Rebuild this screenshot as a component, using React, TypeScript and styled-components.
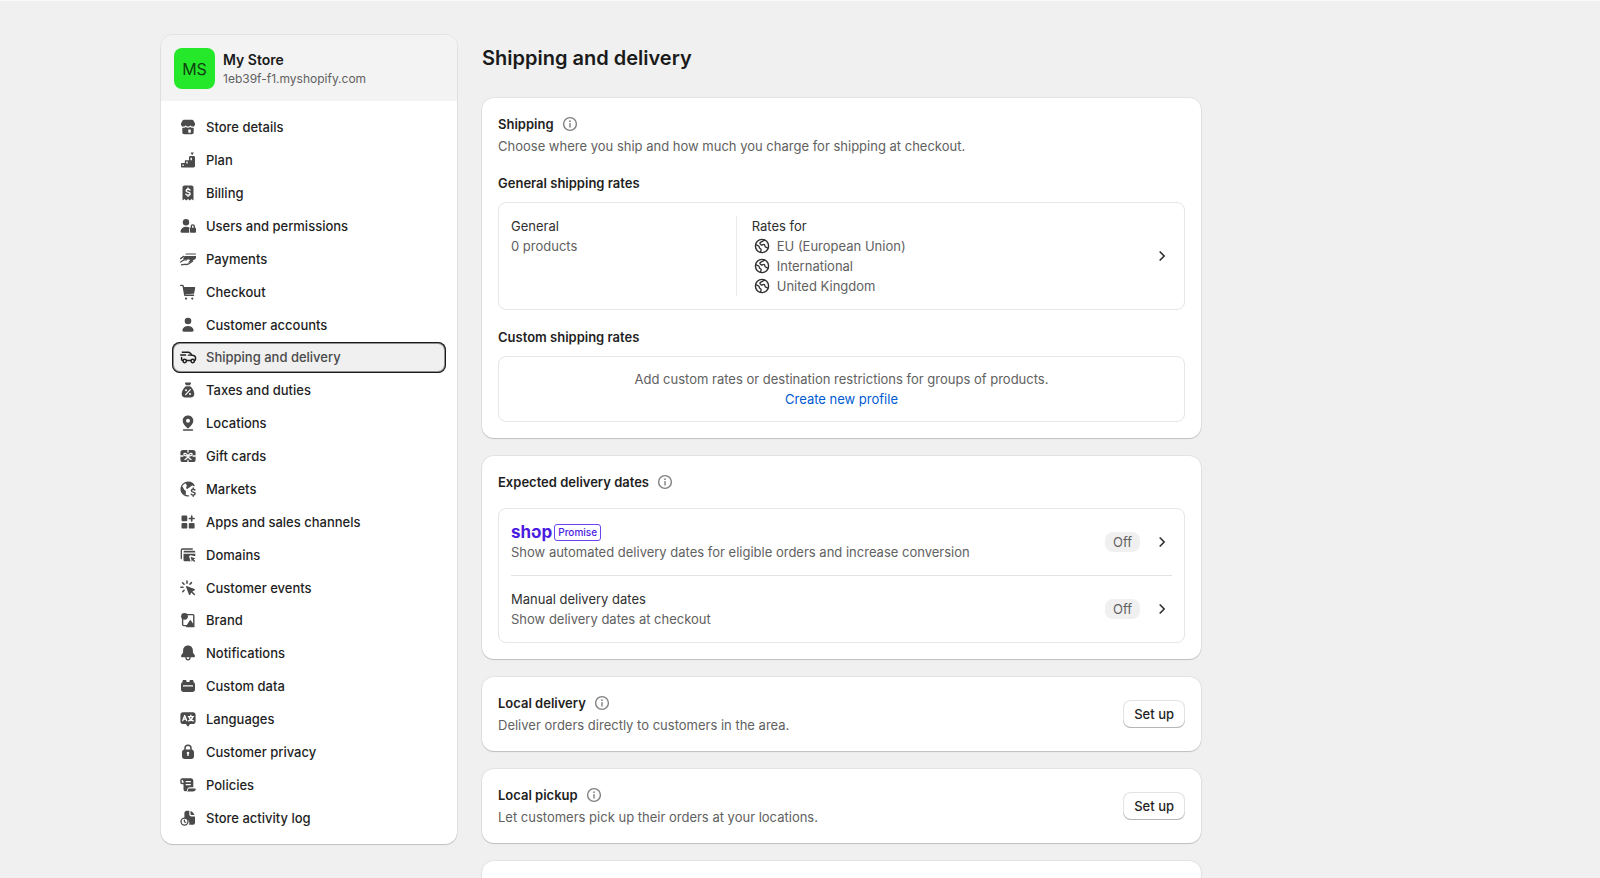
import React from 'react';
import styled, { createGlobalStyle, css } from 'styled-components';

const GlobalStyle = createGlobalStyle`
  *, *::before, *::after { box-sizing: border-box; }
  body {
    margin: 0;
    background: #f0f0f0;
    color: #303030;
    font-family: Inter, "Liberation Sans", sans-serif;
    font-size: 13px;
    line-height: 20px;
  }
  h1, h2, h3, p, ul { margin: 0; padding: 0; }
  ul { list-style: none; }
  button { font: inherit; }
`;

const Page = styled.div`
  display: flex;
  align-items: flex-start;
  gap: 25px;
  min-height: 100vh;
  padding: 34px 16px 0 161px;
  border-top: 1px solid #fafafa;
`;

const surface = css`
  background: #fff;
  border-radius: 12px;
  box-shadow: 0 1px 1px rgba(0, 0, 0, 0.16), 0 0 0 1px rgba(0, 0, 0, 0.05);
`;

const Sidebar = styled.aside`
  ${surface}
  flex: 0 0 296px;
  overflow: hidden;
`;

const StoreHeader = styled.div`
  display: flex;
  align-items: center;
  gap: 8px;
  padding: 13px 13px 12px;
  background: #f3f3f3;
`;

const Avatar = styled.span`
  display: grid;
  place-items: center;
  width: 41px;
  height: 41px;
  border-radius: 8px;
  background: #25e82b;
  color: #10400f;
  font-size: 16px;
`;

const StoreText = styled.div`
  padding-top: 3px;
`;

const StoreName = styled.p`
  color: #1a1a1a;
  font-size: 14px;
  font-weight: 600;
  line-height: 18px;
`;

const Muted = styled.p`
  color: #616161;
`;

const StoreDomain = styled(Muted)`
  font-size: 12px;
`;

const NavList = styled.ul`
  display: grid;
  grid-auto-rows: 1fr;
  align-items: center;
  min-height: 743px;
  padding: 10px 11px;
`;

const NavLink = styled.a<{ $active?: boolean }>`
  display: flex;
  align-items: center;
  gap: 8px;
  height: 31px;
  padding: 0 6px;
  border-radius: 8px;
  color: ${p => (p.$active ? '#4a4a4a' : '#1f1f1f')};
  font-weight: 500;
  text-decoration: none;
  ${p =>
    p.$active &&
    css`
      background: #f0f0f0;
      box-shadow: inset 0 0 0 1px #1a1a1a, inset 0 0 0 2px rgba(0, 0, 0, 0.4);
    `}
`;

const Icon = styled.svg<{ $tone?: string }>`
  flex: none;
  width: 20px;
  height: 20px;
  color: ${p => p.$tone || '#4a4a4a'};
  fill: currentColor;
`;

const Main = styled.main`
  flex: 0 1 719px;
  display: flex;
  flex-direction: column;
  gap: 18px;
  min-width: 0;
`;

const Title = styled.h1`
  padding: 9px 0 8px;
  color: #1a1a1a;
  font-size: 20px;
  font-weight: 600;
  line-height: 28px;
`;

const Card = styled.section`
  ${surface}
  padding: 16px;
`;

const HeadingRow = styled.div`
  display: flex;
  align-items: center;
  gap: 6px;
`;

const CardHeading = styled.h2`
  color: #1f1f1f;
  font-size: 13px;
  font-weight: 600;
`;

const HeadingStack = styled.div`
  display: flex;
  flex-direction: column;
  gap: 2px;
`;

const SubHeading = styled.h3`
  margin: 17px 0 9px;
  color: #1f1f1f;
  font-size: 13px;
  font-weight: 600;
`;

const IconButton = styled.button`
  display: flex;
  padding: 0;
  border: 0;
  background: none;
`;

const Box = styled.div`
  border: 1px solid #e6e6e6;
  border-radius: 8px;
`;

const RateBox = styled(Box)`
  display: flex;
  align-items: center;
  padding: 13px 12px;
`;

const Profile = styled.div`
  flex: 0 0 34%;
  align-self: stretch;
`;

const Zones = styled.div`
  flex: 1;
  padding-left: 15px;
  border-left: 1px solid #ebebeb;
`;

const Zone = styled.li`
  display: flex;
  align-items: center;
  gap: 5px;
  color: #616161;
`;

const EmptyBox = styled(Box)`
  padding: 12px;
  text-align: center;
`;

const TextLink = styled.a`
  color: #005bd3;
  text-decoration: none;
`;

const DeliveryBox = styled(Box)`
  margin-top: 16px;
  padding: 0 12px;
`;

const DeliveryRow = styled.div`
  display: flex;
  align-items: center;
  gap: 12px;
  padding: 13px 0;
  & + & {
    border-top: 1px solid #e3e3e3;
  }
`;

const Grow = styled.div`
  flex: 1;
  min-width: 0;
`;

const Badge = styled.span`
  padding: 0 8px;
  border-radius: 8px;
  background: #f0f0f0;
  color: #616161;
`;

const ShopPromise = styled.div`
  display: flex;
  align-items: center;
  gap: 2px;
  height: 20px;
  color: #4a1be0;
`;

const Wordmark = styled.span`
  position: relative;
  font-size: 17px;
  font-weight: 700;
`;

const Notch = styled.svg`
  position: absolute;
  left: 19px;
  top: 8px;
  width: 6px;
  height: 4px;
`;

const PromiseTag = styled.span`
  padding: 0 3px;
  border: 1px solid #6a45f0;
  border-radius: 3px;
  font-size: 10px;
  font-weight: 500;
  line-height: 15px;
`;

const SetupCard = styled(Card)`
  display: flex;
  align-items: center;
`;

const SetupButton = styled.button`
  height: 28px;
  padding: 0 11px;
  border: 0;
  border-radius: 8px;
  background: #fff;
  color: #1f1f1f;
  font-weight: 500;
  box-shadow: inset 0 -1px 0 #b5b5b5, inset 0 0 0 1px #e3e3e3;
`;

const line = { fill: 'none', stroke: 'currentColor', strokeWidth: 1.5, strokeLinecap: 'round', strokeLinejoin: 'round' } as const;
const cut = { ...line, stroke: '#fff' } as const;

const icons: Record<string, React.ReactNode> = {
  store: (
    <>
      <path d="M6 2.800h8c.6 0 1.100.3 1.400.8l1.600 2.800c.3 1.300-.4 3.200-2.200 3.200-1.100 0-1.900-.6-2.300-1.400-.4.8-1.300 1.400-2.400 1.400S8.100 9 7.700 8.200C7.300 9 6.400 9.600 5.300 9.600 3.500 9.600 2.700 7.700 3 6.400l1.600-2.800c.3-.5.8-.8 1.400-.8z" />
      <path fillRule="evenodd" d="M4.300 10.700c1.300.2 2.500-.1 3.400-.8 1.300 1 3.300 1 4.600 0 .9.700 2.100 1 3.400.8v4.500c0 1.200-.8 2-2 2H6.300c-1.200 0-2-.8-2-2zM10.300 12.600v3.200h2.500v-3.200z" />
    </>
  ),
  plan: (
    <>
      <path fillRule="evenodd" d="M3 14c0-.6.4-1 1-1h2.800v-1.800c0-.6.4-1 1-1H11V7.500C11 6.700 11.600 6 12.400 6h3.200c.8 0 1.400.7 1.400 1.500v8.600c0 .8-.6 1.400-1.400 1.400H4c-.6 0-1-.4-1-1zm1.400 .6v1.500h1.300v-1.500zm3.900-3v1.900h1.400v-1.900zm4.200-3.900v2.600h1.400V7.700z" />
      <path d="M12.600 2.400h3.200l-1.200 2.400h-.8z" />
    </>
  ),
  billing: (
    <>
      <path d="M4.500 4.500c0-1.100.9-2 2-2h7c1.100 0 2 .9 2 2v13l-1.900-1.600-1.800 1.600-1.800-1.600-1.800 1.600-1.800-1.600-1.900 1.600z" />
      <path {...cut} strokeWidth={1.4} d="M12 7.100c-.4-.6-1.100-.8-2-.8-1.100 0-1.900.5-1.900 1.400 0 2 4 .9 4 3 0 .9-.9 1.500-2.100 1.500-.9 0-1.700-.3-2.100-1M10 5v1.200M10 12.400v1" />
    </>
  ),
  users: (
    <>
      <circle cx="8" cy="6.2" r="3.2" />
      <path d="M8 10.700c1.500 0 2.800.4 3.800 1-.4.4-.6 1-.6 1.600v3.400H3.700c-.8 0-1.400-.6-1.200-1.400.5-2.700 2.700-4.600 5.500-4.600z" />
      <path {...line} strokeWidth={1.4} d="M13.300 12v-1.600a1.500 1.500 0 0 1 3 0V12" />
      <rect x="12" y="11.7" width="6" height="5" rx="1" />
    </>
  ),
  payments: (
    <>
      <path d="M8.800 4.500h8.400c.6 0 .8.4.8 1H7.200c.3-.6.9-1 1.600-1zM6.500 7H18v1.600c0 1-.7 1.700-1.600 1.900L12 13.400l-2 .1 1.700-1.700c.5-.5.2-1.300-.5-1.300H8.400L5 10.600z" />
      <path {...line} strokeWidth={1.3} d="M2.600 9.600 5.700 7.400M8.600 10.800H6.200L2.600 13M3.500 15.800c2.500-.9 4.500.2 6.500-.6l4.500-2.900" />
    </>
  ),
  checkout: (
    <>
      <path {...line} strokeWidth={1.4} d="M2.700 3.400h1.500c.5 0 .9.3 1 .8l1.600 9h8.700" />
      <path d="M5.300 5h11.200c.5 0 .8.4.7.9l-1 5c-.1.5-.5.9-1 .9L6.700 12.300z" />
      <circle cx="8" cy="16.6" r="1.1" />
      <circle cx="14.3" cy="16.6" r="1.1" />
    </>
  ),
  person: (
    <>
      <circle cx="10" cy="6" r="3.3" />
      <path d="M10 11c2.800 0 5 1.600 5.600 4 .2.9-.5 1.700-1.400 1.700H5.800c-.9 0-1.600-.8-1.400-1.700.6-2.400 2.800-4 5.600-4z" />
    </>
  ),
  truck: (
    <>
      <path {...line} d="M4.300 5.200h6c.8 0 1.500.4 2 1l1.600 1.900 2.300.7c.8.3 1.300.9 1.300 1.700v1.700c0 .8-.4 1.300-1.100 1.300M2.700 8h4.800M3.600 10.500v1.700c0 .8.300 1.300 1.100 1.300M8.800 13.500h3.800" />
      <path {...line} strokeWidth={1.2} d="M10.300 8.100h3.400" />
      <circle {...line} cx="6.7" cy="14" r="1.7" />
      <circle {...line} cx="14.7" cy="14" r="1.7" />
    </>
  ),
  taxes: (
    <>
      <path d="M7.600 2.500h4.800c.5 0 .8.5.5 1L12 5.300H8l-.9-1.800c-.3-.5 0-1 .5-1zM7.800 6.300h4.400c2.300 1.900 4.100 4.800 4.100 7.400 0 2.500-1.300 3.800-3.500 3.800H7.200c-2.200 0-3.500-1.300-3.500-3.800 0-2.600 1.800-5.500 4.100-7.400z" />
      <path {...cut} strokeWidth={1.2} d="m12.300 9.600-4.600 5" />
      <circle cx="8" cy="10.2" r="1" fill="#fff" />
      <circle cx="12" cy="14" r="1" fill="#fff" />
    </>
  ),
  location: (
    <>
      <path fillRule="evenodd" d="M10 2.400c3 0 5.300 2.200 5.300 5.200 0 3.400-2.600 5.500-4.400 7.300-.5.500-1.300.5-1.800 0-1.800-1.800-4.400-3.900-4.400-7.300 0-3 2.300-5.200 5.300-5.200zm0 3.400a2 2 0 1 0 0 4 2 2 0 0 0 0-4z" />
      <path {...line} strokeWidth={1.3} d="M5.500 17h9" />
    </>
  ),
  gift: (
    <>
      <rect x="2.4" y="4" width="15.2" height="12" rx="2.6" />
      <path {...cut} strokeWidth={1.3} d="M10 10C8.500 6.500 5.300 6.800 6 8.700c.4 1 2 1.300 4 1.300zm0 0c1.500-3.500 4.700-3.200 4 -1.300-.4 1-2 1.300-4 1.300zM10 10c-.5 1.500-1.500 2.800-3 3.500M10 10c.5 1.500 1.500 2.800 3 3.500M2.400 10H5M15 10h2.600M10 4v2M10 14.300V16" />
    </>
  ),
  markets: (
    <>
      <path {...line} strokeWidth={1.4} d="M16 6.600A6.900 6.900 0 1 0 10.500 16.900" />
      <path d="M3.500 7.300c1 .3 2 1.300 2.200 2.500.2 1 1.500 1.300 2 2.200.6 1.100-.1 2.300 0 4.300-3-1-4.700-3.500-4.700-6.300zM7.600 3.700l3.800-.6c2 .4 3.500 1.400 4.400 2.800l-2.500 1c-1 .4-1.300 1.700-2.500 1.800-1 .1-.8 1.200-1.600 1.300-1.300 0-1.200-1.600-.7-2.500.6-1 .3-1.500-.3-2z" />
      <path {...line} strokeWidth={1.4} d="M16.900 11c-.4-.5-1-.7-1.700-.7-1 0-1.800.5-1.800 1.400 0 1.900 3.700.9 3.700 2.900 0 .9-.9 1.500-1.900 1.500-.9 0-1.600-.3-2-.9M15.200 9v1.200M15.200 16.200v1.100" />
    </>
  ),
  apps: (
    <>
      <rect x="3.5" y="3.6" width="5.8" height="5.7" rx="1.2" />
      <rect x="3.5" y="10.9" width="5.8" height="5.7" rx="1.2" />
      <rect x="10.8" y="10.9" width="5.8" height="5.7" rx="1.2" />
      <path {...line} strokeWidth={1.7} d="M13.700 4.200v4.600M11.400 6.500H16" />
    </>
  ),
  domains: (
    <>
      <path {...line} strokeWidth={1.3} d="M3.300 13.500V5.400c0-.8.6-1.400 1.400-1.400h9.600" />
      <path d="M5.500 7.200c0-.8.6-1.400 1.400-1.400h9c.8 0 1.400.6 1.400 1.400v.4H5.500zM5.500 8.700h11.800v2.600l-4.600-1.100c-1-.2-1.800.6-1.500 1.600l1.400 4.500H6.900c-.8 0-1.400-.6-1.400-1.400z" />
      <path d="m12.700 11.700 4.900 1.700-2 .9 1.600 1.700-.9.9-1.700-1.700-.7 1.700z" />
    </>
  ),
  events: (
    <>
      <path {...line} strokeWidth={1.5} d="M9 3v2.200M4.600 4.700l1.500 1.500M13.500 4.600 12 6.100M2.900 9.300H5M4.700 13.700l1.400-1.400" />
      <path d="M8.600 8.100 16.500 11c.6.2.6 1 .1 1.300l-2.200 1.100 2.500 2.600c.3.3.3.7 0 1s-.8.3-1.100 0l-2.500-2.500-1.100 2.200c-.3.5-1.100.5-1.300-.1L8 8.700c-.1-.4.2-.7.6-.6z" />
    </>
  ),
  brand: (
    <>
      <path {...line} strokeWidth={1.4} d="M8 4.600h6.800c.6 0 1 .4 1 1V15M4.600 9v5.600c0 .6.400 1 1 1h4" />
      <circle cx="6.5" cy="6.3" r="3.4" />
      <path d="m11.700 10.500c.3-.5 1-.5 1.300 0l3.600 5.600c.3.5 0 1.200-.6 1.200H8.800c-.6 0-1-.7-.6-1.200z" />
    </>
  ),
  bell: (
    <>
      <path d="M10 2.500c3 0 4.900 2.200 4.900 5v2l1.800 2.700c.6.9 0 2.100-1.100 2.100H4.400c-1.100 0-1.700-1.200-1.100-2.100l1.800-2.700v-2c0-2.800 1.900-5 4.900-5z" />
      <path {...line} strokeWidth={1.3} d="M8 14.500c0 1.400.9 2.300 2 2.300s2-.9 2-2.300" />
    </>
  ),
  data: (
    <>
      <path d="M4.500 5.300c0-.7.5-1.200 1.200-1.200h1.600c.7 0 1.200.5 1.200 1.200V6h3v-.7c0-.7.5-1.200 1.200-1.200h1.600c.7 0 1.200.5 1.200 1.200v.9c.9.300 1.500 1.100 1.500 2.100v.8H3v-.8c0-1 .6-1.800 1.500-2.100z" />
      <path fillRule="evenodd" d="M3 9h14v4.600c0 1.300-.9 2.300-2.200 2.300H5.200C3.900 15.900 3 14.900 3 13.600zm2 .2v1.300h10V9.200z" />
    </>
  ),
  languages: (
    <>
      <path d="M5 3.200h10c1.500 0 2.600 1.100 2.600 2.600v6.600c0 1.500-1.100 2.600-2.600 2.600h-3l-1.500 2.200c-.2.4-.8.4-1 0L8 15H5c-1.500 0-2.600-1.100-2.600-2.600V5.800c0-1.500 1.100-2.600 2.600-2.600z" />
      <path {...cut} strokeWidth={1.3} d="m4.700 11.700 2-5.200 2 5.200M5.400 10.200H8M10.300 7.600h5.200M12.900 6.200v1.400M14.600 7.800c-.3 1.900-1.800 3.500-4 4M11.200 7.800c.3 1.900 1.900 3.500 4.100 4" />
    </>
  ),
  lock: (
    <>
      <path {...line} strokeWidth={1.5} d="M7 8V6.200a3 3 0 0 1 6 0V8" />
      <path fillRule="evenodd" d="M6.300 7.500h7.400c1.400.3 2.300 1.400 2.300 2.900v3.800c0 1.700-1.100 2.800-2.800 2.800H6.800C5.100 17 4 15.900 4 14.200v-3.800c0-1.500.9-2.600 2.300-2.900zM10 9.800a1.300 1.300 0 0 0-.7 2.400v1.900h1.400v-1.900a1.300 1.300 0 0 0-.7-2.400z" />
    </>
  ),
  policies: (
    <>
      <path {...line} strokeWidth={1.4} d="M5.500 8.500H3.900c-.6 0-.9-.3-.9-.9V5.300c0-.8.600-1.300 1.300-1.300s1.200.5 1.200 1.300" />
      <path fillRule="evenodd" d="M4.600 3.300h8.300c1.500 0 2.400 1 2.400 2.400v6.500h-3.500c-1.700 0-2.600 1.200-2.600 2.600 0 .9-.5 1.500-1.300 1.500-1.600 0-2.400-1-2.400-2.400V6zM7.700 6v1.300h5.100V6zm0 2.900v1.300h5.100V8.900z" />
      <path d="M10.600 13.600h6.400c.6 0 .9.4.7 1-.4 1.300-1.300 2-2.600 2H9c1-.5 1.100-1.200 1.100-2 0-.6.2-.9.5-1z" />
    </>
  ),
  log: (
    <>
      <path d="M8.700 2.700h2.600v3.500c0 1.300.9 2.200 2.200 2.200H17v6c0 1.500-1 2.400-2.400 2.400h-3.400c.9-3.500-1.300-6.500-4.800-6.500V5.100c0-1.400.9-2.400 2.300-2.400z" />
      <path d="M12.500 3c1.700.6 3.300 2.200 4 4h-2.700c-.8 0-1.300-.5-1.300-1.300z" />
      <circle {...line} strokeWidth={1.3} cx="6.5" cy="13.6" r="3.5" />
      <path {...line} strokeWidth={1.2} d="M6.400 12v1.800l1.300.7" />
    </>
  ),
  globe: (
    <>
      <circle {...line} strokeWidth={1.4} cx="10" cy="10" r="6.6" />
      <path {...line} strokeWidth={1.3} d="M3.700 8.600 6.300 9.800c.6.300.9.700 1 1.300l.2.900 1.300 1c.4.3.5.7.3 1.200l-.7 2.100" />
      <path {...line} strokeWidth={1.3} d="M12.700 4.100 8.500 6.300c-.7.400-.8 1.200-.2 1.700l.8.700c.3.300.8.400 1.200.2l1-.4c.6-.2 1.200.1 1.400.7l.3 1.100c.1.400.4.700.8.900l2.100.9" />
    </>
  ),
  info: (
    <>
      <circle {...line} strokeWidth={1.4} cx="10" cy="10" r="6.4" />
      <path {...line} strokeWidth={1.4} d="M10 9.600v3.400" />
      <circle cx="10" cy="7.2" r=".9" />
    </>
  ),
  chevron: <path {...line} strokeWidth={1.7} d="m8.200 6 4 4-4 4" />,
};

const Glyph = ({ name, tone }: { name: string; tone?: string }) => (
  <Icon viewBox="0 0 20 20" $tone={tone} aria-hidden="true">
    {icons[name]}
  </Icon>
);

const navItems: [string, string][] = [
  ['store', 'Store details'],
  ['plan', 'Plan'],
  ['billing', 'Billing'],
  ['users', 'Users and permissions'],
  ['payments', 'Payments'],
  ['checkout', 'Checkout'],
  ['person', 'Customer accounts'],
  ['truck', 'Shipping and delivery'],
  ['taxes', 'Taxes and duties'],
  ['location', 'Locations'],
  ['gift', 'Gift cards'],
  ['markets', 'Markets'],
  ['apps', 'Apps and sales channels'],
  ['domains', 'Domains'],
  ['events', 'Customer events'],
  ['brand', 'Brand'],
  ['bell', 'Notifications'],
  ['data', 'Custom data'],
  ['languages', 'Languages'],
  ['lock', 'Customer privacy'],
  ['policies', 'Policies'],
  ['log', 'Store activity log'],
];

const zones = ['EU (European Union)', 'International', 'United Kingdom'];

const InfoHeading = ({ children }: { children: string }) => (
  <HeadingRow>
    <CardHeading>{children}</CardHeading>
    <IconButton type="button" aria-label={`About ${children}`}>
      <Glyph name="info" tone="#808080" />
    </IconButton>
  </HeadingRow>
);

const Open = ({ label }: { label: string }) => (
  <IconButton type="button" aria-label={label}>
    <Glyph name="chevron" tone="#303030" />
  </IconButton>
);

const Setup = ({ title, text }: { title: string; text: string }) => (
  <SetupCard>
    <Grow>
      <HeadingStack>
        <InfoHeading>{title}</InfoHeading>
        <Muted>{text}</Muted>
      </HeadingStack>
    </Grow>
    <SetupButton type="button">Set up</SetupButton>
  </SetupCard>
);

export default function App() {
  return (
    <>
      <GlobalStyle />
      <Page>
        <Sidebar>
          <StoreHeader>
            <Avatar>MS</Avatar>
            <StoreText>
              <StoreName>My Store</StoreName>
              <StoreDomain>1eb39f-f1.myshopify.com</StoreDomain>
            </StoreText>
          </StoreHeader>
          <nav aria-label="Settings">
            <NavList>
              {navItems.map(([icon, label]) => (
                <li key={label}>
                  <NavLink
                    href="#"
                    $active={icon === 'truck'}
                    aria-current={icon === 'truck' ? 'page' : undefined}
                  >
                    <Glyph name={icon} tone={icon === 'truck' ? '#1f1f1f' : undefined} />
                    {label}
                  </NavLink>
                </li>
              ))}
            </NavList>
          </nav>
        </Sidebar>
        <Main>
          <Title>Shipping and delivery</Title>
          <Card>
            <HeadingStack>
              <InfoHeading>Shipping</InfoHeading>
              <Muted>Choose where you ship and how much you charge for shipping at checkout.</Muted>
            </HeadingStack>
            <SubHeading>General shipping rates</SubHeading>
            <RateBox>
              <Profile>
                <p>General</p>
                <Muted>0 products</Muted>
              </Profile>
              <Zones>
                <p>Rates for</p>
                <ul>
                  {zones.map(zone => (
                    <Zone key={zone}>
                      <Glyph name="globe" tone="#303030" />
                      {zone}
                    </Zone>
                  ))}
                </ul>
              </Zones>
              <Open label="Open general rates" />
            </RateBox>
            <SubHeading>Custom shipping rates</SubHeading>
            <EmptyBox>
              <Muted>Add custom rates or destination restrictions for groups of products.</Muted>
              <TextLink href="#">Create new profile</TextLink>
            </EmptyBox>
          </Card>
          <Card>
            <InfoHeading>Expected delivery dates</InfoHeading>
            <DeliveryBox>
              <DeliveryRow>
                <Grow>
                  <ShopPromise>
                    <Wordmark>
                      shop
                      <Notch viewBox="0 0 6 4" aria-hidden="true">
                        <path d="M0 1h5v1.500H0z" fill="#fff" />
                      </Notch>
                    </Wordmark>
                    <PromiseTag>Promise</PromiseTag>
                  </ShopPromise>
                  <Muted>Show automated delivery dates for eligible orders and increase conversion</Muted>
                </Grow>
                <Badge>Off</Badge>
                <Open label="Open Shop Promise" />
              </DeliveryRow>
              <DeliveryRow>
                <Grow>
                  <p>Manual delivery dates</p>
                  <Muted>Show delivery dates at checkout</Muted>
                </Grow>
                <Badge>Off</Badge>
                <Open label="Open manual delivery dates" />
              </DeliveryRow>
            </DeliveryBox>
          </Card>
          <Setup title="Local delivery" text="Deliver orders directly to customers in the area." />
          <Setup title="Local pickup" text="Let customers pick up their orders at your locations." />
          <Card />
        </Main>
      </Page>
    </>
  );
}
